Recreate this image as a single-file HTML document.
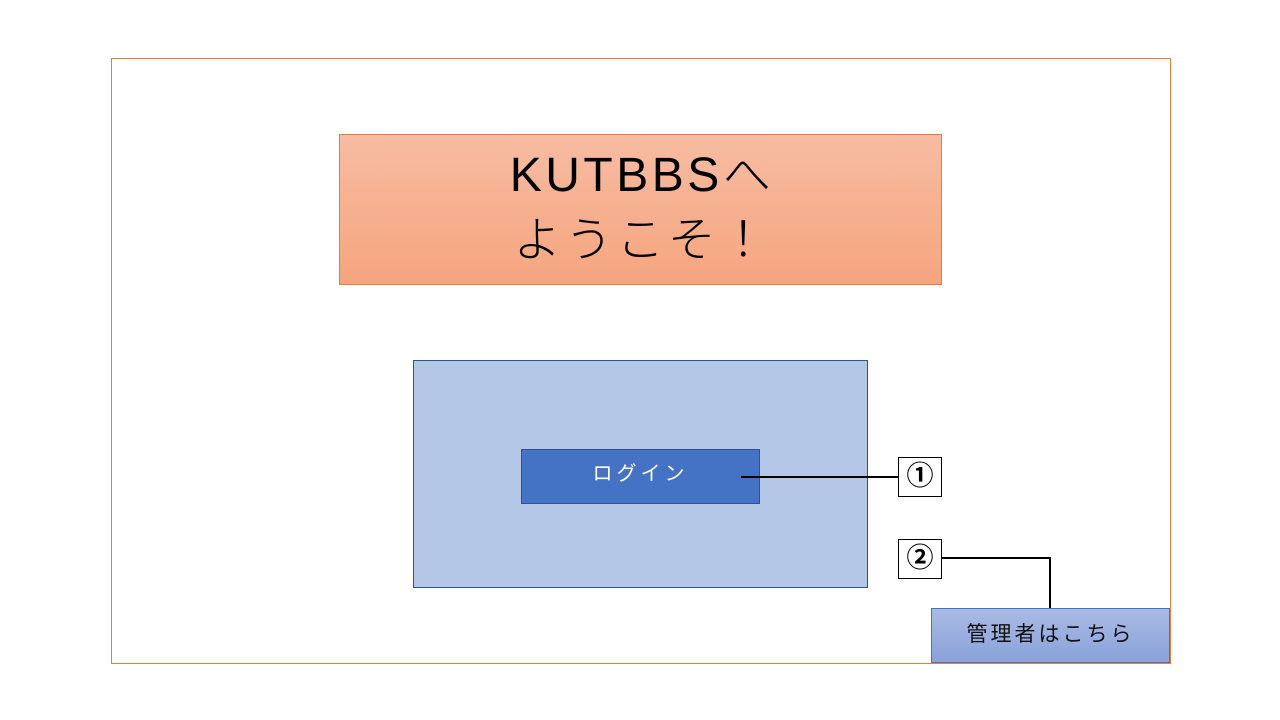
<!DOCTYPE html>
<html><head><meta charset="utf-8"><style>
body{margin:0;width:1280px;height:720px;background:#fff;position:relative;overflow:hidden;font-family:"Liberation Sans","Noto Sans CJK JP",sans-serif}
div{position:absolute;box-sizing:border-box}
</style></head><body>
<div style="left:111px;top:58px;width:1060px;height:606px;border:1px solid #ED7D31"></div>
<div style="left:339px;top:134px;width:603px;height:151px;border:1px solid #ED7D31;background:linear-gradient(#f7bca2,#f5a57e);text-align:center;font-size:48px;line-height:65px;padding-top:8px;padding-left:3px;letter-spacing:3.5px;font-weight:300;color:#000">KUTBBSへ<br>ようこそ！</div>
<div style="left:413px;top:360px;width:455px;height:228px;background:#b4c7e7;border:1px solid #2f528f"></div>
<div style="left:521px;top:449px;width:239px;height:55px;background:#4472c4;border:1px solid #2f528f;color:#fff;font-size:20px;letter-spacing:4px;text-align:center;line-height:49px">ログイン</div>
<div style="left:741px;top:476px;width:158px;height:2px;background:#000"></div>
<div style="left:898px;top:457px;width:44px;height:40px;border:1px solid #000;background:#fff;font-size:27px;font-weight:bold;text-align:center;line-height:36px">①</div>
<div style="left:898px;top:539px;width:44px;height:40px;border:1px solid #000;background:#fff;font-size:27px;font-weight:bold;text-align:center;line-height:36px">②</div>
<div style="left:941px;top:557px;width:110px;height:2px;background:#000"></div>
<div style="left:1049px;top:557px;width:2px;height:52px;background:#000"></div>
<div style="left:931px;top:608px;width:239px;height:55px;background:linear-gradient(#a9bbe3,#8aa2da);border:1px solid #4472c4;color:#111;font-size:21px;letter-spacing:3px;text-align:center;line-height:52px">管理者はこちら</div>
</body></html>
